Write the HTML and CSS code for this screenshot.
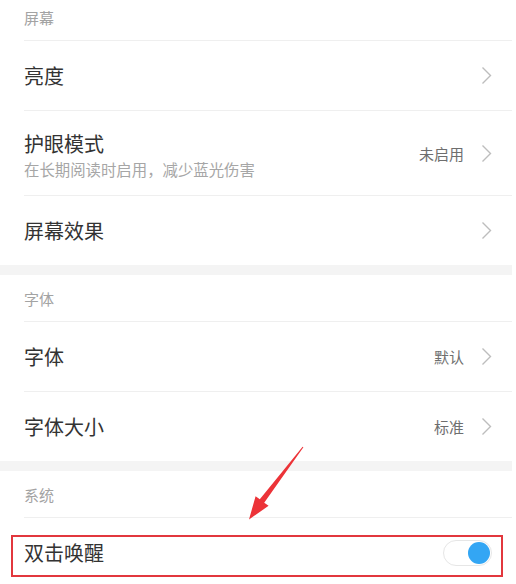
FILE: index.html
```html
<!DOCTYPE html>
<html lang="zh-CN">
<head>
<meta charset="utf-8">
<title>显示设置</title>
<link rel="stylesheet" href="styles.css">
</head>
<body>
<div class="screen">
  <div class="group">
    <div class="header">屏幕</div>
    <div class="row">
      <div class="title">亮度</div>
      <div class="right"><svg class="chev" viewBox="0 0 11 19"><polyline points="1.5,1.5 9.5,9.5 1.5,17.5"/></svg></div>
    </div>
    <div class="row tall">
      <div class="textblock">
        <div class="title">护眼模式</div>
        <div class="sub">在长期阅读时启用，减少蓝光伤害</div>
      </div>
      <div class="right"><span class="value">未启用</span><svg class="chev" viewBox="0 0 11 19"><polyline points="1.5,1.5 9.5,9.5 1.5,17.5"/></svg></div>
    </div>
    <div class="row">
      <div class="title">屏幕效果</div>
      <div class="right"><svg class="chev" viewBox="0 0 11 19"><polyline points="1.5,1.5 9.5,9.5 1.5,17.5"/></svg></div>
    </div>
  </div>
  <div class="band"></div>
  <div class="group">
    <div class="header">字体</div>
    <div class="row">
      <div class="title">字体</div>
      <div class="right"><span class="value">默认</span><svg class="chev" viewBox="0 0 11 19"><polyline points="1.5,1.5 9.5,9.5 1.5,17.5"/></svg></div>
    </div>
    <div class="row">
      <div class="title">字体大小</div>
      <div class="right"><span class="value">标准</span><svg class="chev" viewBox="0 0 11 19"><polyline points="1.5,1.5 9.5,9.5 1.5,17.5"/></svg></div>
    </div>
  </div>
  <div class="band"></div>
  <div class="group">
    <div class="header">系统</div>
    <div class="row highlighted">
      <div class="title">双击唤醒</div>
      <div class="right"><span class="toggle"><span class="knob"></span></span></div>
      <div class="redbox"></div>
    </div>
  </div>
</div>
<svg class="arrow" viewBox="0 0 516 584" width="516" height="584">
  <polygon points="303.4,447.3 302.6,446.7 259.8,499.2 255.6,496.2 249,519.5 268.6,505.8 264.2,502.8"/>
</svg>
</body>
</html>
```

FILE: styles.css
```css
html, body {
  margin: 0;
  padding: 0;
  background: #ffffff;
}
body {
  position: relative;
  width: 516px;
  height: 584px;
  overflow: hidden;
  font-family: "Noto Sans CJK SC", "Noto Sans", sans-serif;
}
.screen {
  width: 512px;
  margin-top: -6px;
  background: #ffffff;
}
.header {
  height: 46px;
  padding-left: 24px;
  display: flex;
  align-items: center;
  font-size: 15px;
  color: #a3a3a3;
}
.row {
  position: relative;
  height: 69px;
  margin-left: 24px;
  padding-right: 20px;
  border-top: 1px solid #efefef;
  display: flex;
  align-items: center;
  justify-content: space-between;
}
.row.tall {
  height: 84px;
}
.title {
  font-size: 20px;
  line-height: 24px;
  color: #333333;
}
.textblock {
  display: flex;
  flex-direction: column;
  gap: 5.5px;
  margin-top: 6px;
}
.textblock .title {
  line-height: 22px;
}
.sub {
  font-size: 15.4px;
  line-height: 19px;
  color: #a6a6a6;
}
.right {
  display: flex;
  align-items: center;
  gap: 17px;
}
.value {
  font-size: 15px;
  color: #6e6e6e;
}
.chev {
  width: 11px;
  height: 19px;
  display: block;
}
.chev polyline {
  fill: none;
  stroke: #bdbdbd;
  stroke-width: 1.4;
}
.band {
  height: 10px;
  background: #f4f4f4;
}
.toggle {
  box-sizing: border-box;
  width: 49px;
  height: 26px;
  border: 1px solid #e6e6e6;
  border-radius: 13px;
  background: #ffffff;
  display: flex;
  align-items: center;
  justify-content: flex-end;
  padding-right: 1px;
}
.knob {
  width: 22px;
  height: 22px;
  border-radius: 50%;
  background: #33a6f4;
}
.redbox {
  position: absolute;
  left: -13px;
  right: 9px;
  top: 17px;
  height: 42px;
  border: 2px solid #e2373d;
  box-sizing: border-box;
  pointer-events: none;
}
.arrow {
  position: absolute;
  left: 0;
  top: 0;
  pointer-events: none;
}
.arrow polygon {
  fill: #ec3338;
}
```
